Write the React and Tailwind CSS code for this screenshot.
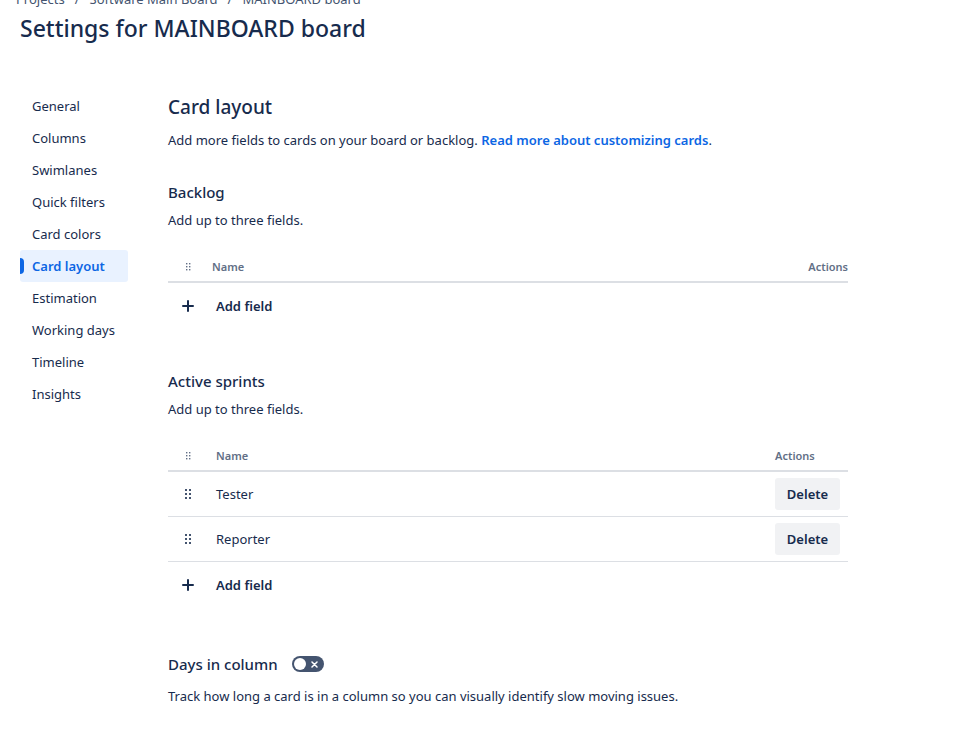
import { useState } from 'react'
import { clsx } from 'clsx'

const crumbs = ['Projects', 'Software Main Board', 'MAINBOARD board']

const navItems = [
  'General',
  'Columns',
  'Swimlanes',
  'Quick filters',
  'Card colors',
  'Card layout',
  'Estimation',
  'Working days',
  'Timeline',
  'Insights',
]

function DragDots({ small }) {
  if (small) {
    return (
      <svg width="6" height="8" viewBox="0 0 6 8" fill="#626F86" className="mx-auto" aria-hidden="true">
        {[0, 3, 6].map((y) => (
          <g key={y}>
            <rect x="1" y={y} width="1.4" height="1.4" />
            <rect x="4" y={y} width="1.4" height="1.4" />
          </g>
        ))}
      </svg>
    )
  }
  return (
    <svg width="6" height="10" viewBox="0 0 6 10" fill="#44546F" className="mx-auto" aria-hidden="true">
      {[0, 4, 8].map((y) => (
        <g key={y}>
          <rect x="0" y={y} width="2" height="2" />
          <rect x="4" y={y} width="2" height="2" />
        </g>
      ))}
    </svg>
  )
}

function AddField() {
  return (
    <button type="button" className="flex h-[46px] items-center font-semibold">
      <span className="flex w-10 justify-center">
        <svg width="12" height="12" viewBox="0 0 12 12" fill="none" stroke="#172B4D" strokeWidth="2" strokeLinecap="round" aria-hidden="true">
          <path d="M6 1v10M1 6h10" />
        </svg>
      </span>
      <span className="pl-2">Add field</span>
    </button>
  )
}

function FieldSection({ title, fields, onDelete }) {
  const empty = fields.length === 0
  const th = 'border-b-2 border-[#DCDFE4] pt-2.5 pb-1.5 text-[11px] leading-4 font-semibold text-[#626F86]'
  const td = 'border-b border-[#DCDFE4] py-1.5'

  return (
    <section>
      <h3 className="text-[15px] leading-5 font-medium">{title}</h3>
      <p className="mt-2">Add up to three fields.</p>
      <table className="mt-[19px] w-full border-separate border-spacing-0 text-left">
        <thead>
          <tr>
            <th className={clsx(th, 'w-10')}>
              <DragDots small />
            </th>
            <th className={clsx(th, empty ? 'pl-1' : 'pl-2')}>Name</th>
            <th className={clsx(th, empty ? 'text-right' : 'w-[73px] pr-2')}>Actions</th>
          </tr>
        </thead>
        <tbody>
          {fields.map((name) => (
            <tr key={name}>
              <td className={td}>
                <DragDots />
              </td>
              <td className={clsx(td, 'pl-2')}>{name}</td>
              <td className={clsx(td, 'pr-2')}>
                <button
                  type="button"
                  onClick={() => onDelete(name)}
                  className="block h-8 w-[65px] rounded-[3px] bg-[#F1F2F4] text-center font-semibold"
                >
                  Delete
                </button>
              </td>
            </tr>
          ))}
        </tbody>
      </table>
      <AddField />
    </section>
  )
}

function Toggle({ id, checked, onChange }) {
  return (
    <span className="relative flex h-4 w-8">
      <input
        id={id}
        type="checkbox"
        role="switch"
        checked={checked}
        onChange={(e) => onChange(e.target.checked)}
        className="h-4 w-8 appearance-none rounded-full bg-[#44546F] checked:bg-[#1F845A]"
      />
      <span
        className={clsx(
          'pointer-events-none absolute inset-0 flex items-center justify-between pr-1.5 pl-0.5',
          checked && 'flex-row-reverse',
        )}
      >
        <span className="size-3 rounded-full bg-white" />
        <svg width="7" height="7" viewBox="0 0 7 7" fill="none" stroke="#fff" strokeWidth="1.5" strokeLinecap="round" aria-hidden="true">
          {checked ? <path d="M1 4l2 2 3-5" /> : <path d="M1 1l5 5M6 1L1 6" />}
        </svg>
      </span>
    </span>
  )
}

export default function App() {
  const [active, setActive] = useState('Card layout')
  const [sprintFields, setSprintFields] = useState(['Tester', 'Reporter'])
  const [daysInColumn, setDaysInColumn] = useState(false)

  return (
    <div className="min-h-screen overflow-hidden bg-white font-['Noto_Sans','Open_Sans',sans-serif] text-[13px] leading-5 text-[#172B4D]">
      <header className="-mt-[11px]">
        <nav aria-label="Breadcrumbs" className="flex gap-2.5 pl-4 text-[#44546F]">
          {crumbs.map((crumb, i) => (
            <span key={crumb} className="flex gap-2.5">
              {i > 0 && <span>/</span>}
              <a href="#">{crumb}</a>
            </span>
          ))}
        </nav>
        <h1 className="mt-[5px] pl-5 text-[23px] leading-7 font-medium">Settings for MAINBOARD board</h1>
      </header>

      <div className="mt-12 flex gap-10 px-5">
        <nav aria-label="Board settings" className="w-27 shrink-0">
          {navItems.map((item) => (
            <a
              key={item}
              href="#"
              onClick={() => setActive(item)}
              className={clsx(
                'relative flex h-8 items-center rounded-[3px] pl-3 whitespace-nowrap',
                item === active && 'bg-[#E9F2FF] font-semibold text-[#0C66E4]',
              )}
            >
              {item === active && <span className="absolute left-0 h-4 w-1 rounded-r-sm bg-[#0C66E4]" />}
              {item}
            </a>
          ))}
        </nav>

        <main className="max-w-[680px] flex-1 pt-[5px] pb-10">
          <h2 className="text-[19px] leading-6 font-medium">Card layout</h2>
          <p className="mt-[11px]">
            Add more fields to cards on your board or backlog.{' '}
            <a href="#" className="font-semibold text-[#0C66E4]">
              Read more about customizing cards
            </a>
            .
          </p>

          <div className="mt-8 flex flex-col gap-[42px]">
            <FieldSection title="Backlog" fields={[]} />
            <FieldSection
              title="Active sprints"
              fields={sprintFields}
              onDelete={(name) => setSprintFields(sprintFields.filter((f) => f !== name))}
            />
            <section className="pt-1">
              <div className="flex items-center gap-3.5">
                <label htmlFor="days-in-column" className="text-[15px] leading-5 font-medium">
                  Days in column
                </label>
                <Toggle id="days-in-column" checked={daysInColumn} onChange={setDaysInColumn} />
              </div>
              <p className="mt-3">
                Track how long a card is in a column so you can visually identify slow moving issues.
              </p>
            </section>
          </div>
        </main>
      </div>
    </div>
  )
}
